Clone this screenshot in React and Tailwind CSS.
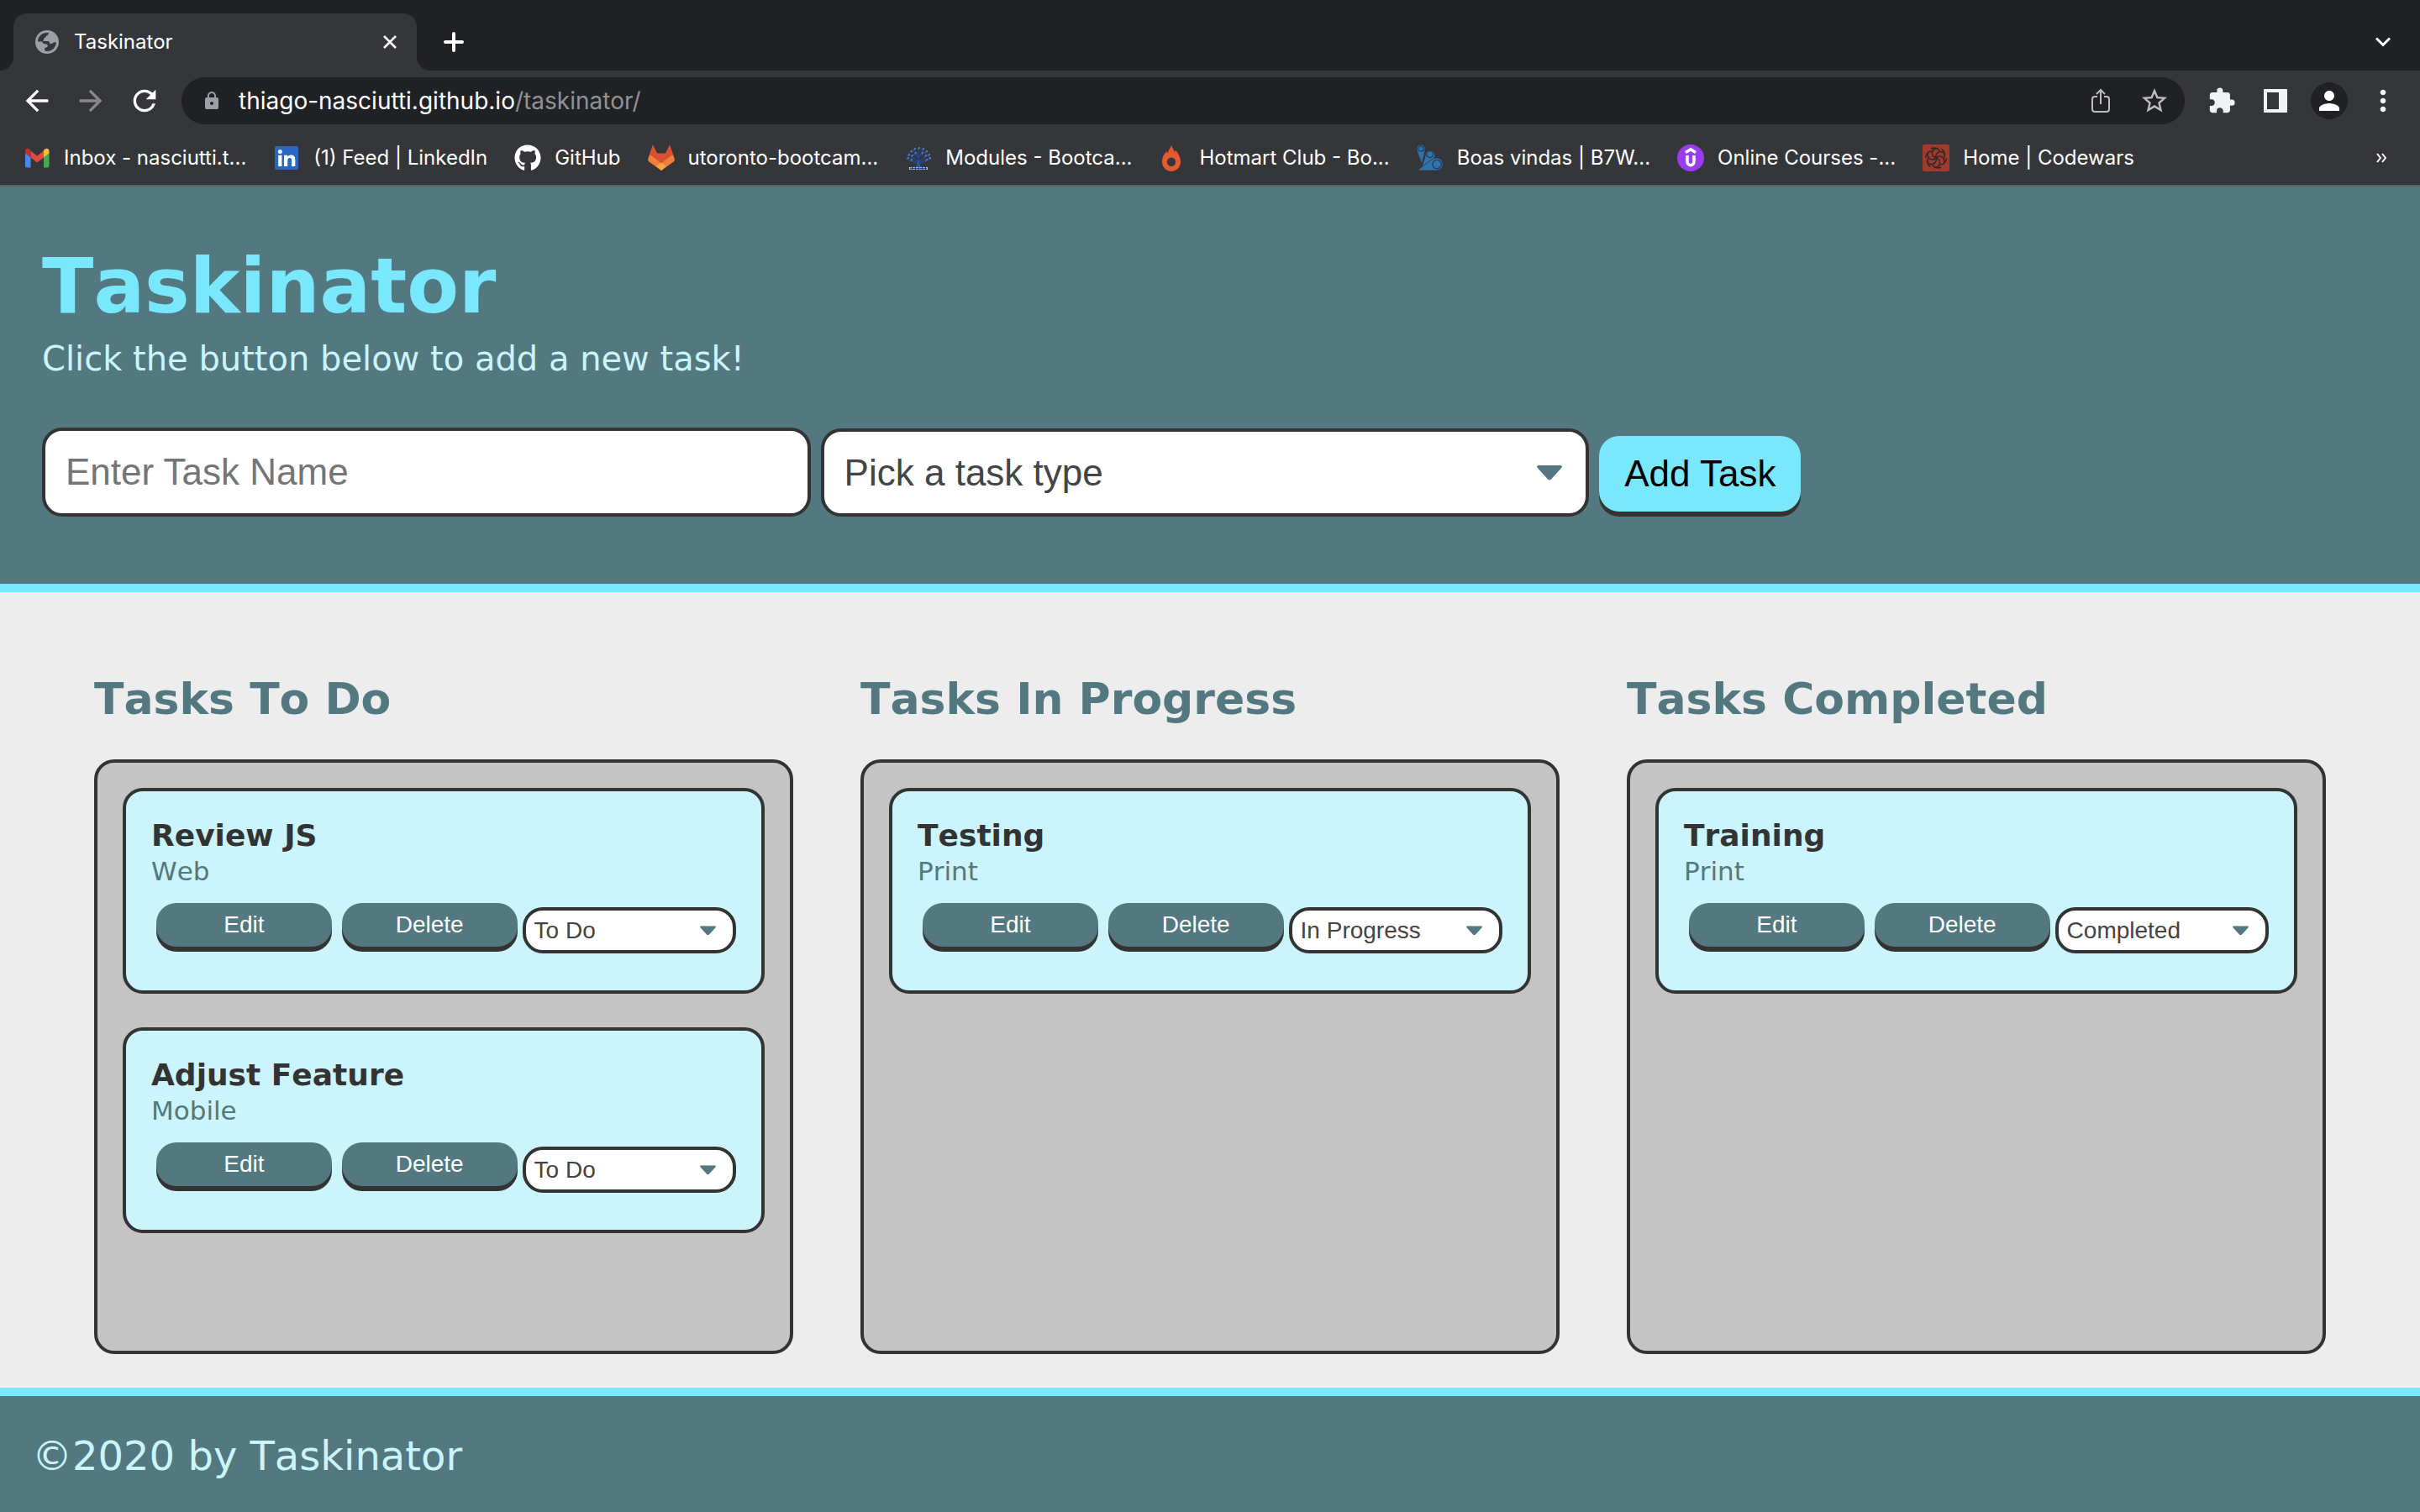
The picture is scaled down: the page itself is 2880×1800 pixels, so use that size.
import React from "react";
import {
  MdArrowBack,
  MdArrowForward,
  MdRefresh,
  MdLock,
  MdStarBorder,
  MdExtension,
  MdMoreVert,
  MdPerson,
} from "react-icons/md";
import { FaGithub } from "react-icons/fa";

/* ---------- icons ---------- */

function GlobeIcon() {
  return (
    <svg viewBox="0 0 28 28" className="size-7 shrink-0" aria-hidden="true">
      <circle cx="14" cy="14" r="14" fill="#9aa0a6" />
      <path
        d="M3 13.5C2.900 8 7.500 3 14 3l2.500.2c-1 .8-1.500 1.600-1.400 2.800-1.800.2-2.800.9-2.600 2.500-1.700.1-2.500 1-2.300 2.900-1 .6-1 1.100-.6 1.600h5c1.800 0 2.600 1.200 2.700 3 1.500.5 3 .3 3.900-1.200l3.700-.8C24.700 20.500 20 25 14 25c-.9 0-2-.2-2.800-.5v-3.700c1.800 0 3.600-.6 3.600-2.300 0-1.400-1-2-2.300-2-2.400 0-3.500-1.200-4.500-3z"
        fill="#35363a"
      />
    </svg>
  );
}

function GmailIcon() {
  return (
    <svg viewBox="0 0 32 32" className="size-8" aria-hidden="true">
      <path d="M2 10v15.500c0 1.100.9 2 2 2h4.500V15z" fill="#4a86f0" />
      <path d="M30.500 10v15.500c0 1.100-.9 2-2 2H24V15z" fill="#46a756" />
      <path d="M8.500 15.500v-8l7.750 6 7.750-6v8l-7.750 6z" fill="#dd4a3e" />
      <path d="M2 8c0-3 3-4 5-2.500l1.500 1.200v8.800L2 10.500z" fill="#bd3329" />
      <path d="M30.500 8c0-3-3-4-5-2.500L24 6.700v8.800l6.500-5z" fill="#f5bd2d" />
    </svg>
  );
}

function LinkedInIcon() {
  return (
    <svg viewBox="0 0 32 32" className="size-8" aria-hidden="true">
      <rect x="2" y="2" width="28" height="28" rx="2" fill="#2b66c0" />
      <circle cx="8.300" cy="8.500" r="2.500" fill="#fff" />
      <path
        d="M6.200 12.700h4.200V26H6.200zM13 12.700h4v1.900c.7-1.200 2.200-2.200 4.300-2.200 4 0 5 2.500 5 6V26h-4.200v-6.800c0-1.700-.4-3.200-2.300-3.200-2 0-2.600 1.500-2.600 3.200V26H13z"
        fill="#fff"
      />
    </svg>
  );
}

function GitLabIcon() {
  return (
    <svg viewBox="0 0 32 32" className="size-8" aria-hidden="true">
      <path d="M6 0l5 10.500h10L26 0l5.500 16L16 31 .5 16z" fill="#d7502f" />
      <path d="M.3 17l2.200-5L16 22l13.500-10 2.200 5c.3 1.500 0 2.700-1 3.500L16 31 1.300 20.500c-1-.8-1.300-2-1-3.500z" fill="#ee7f3c" />
      <path d="M4 11l12 12 12-12z" fill="#d7502f" />
      <path d="M10 26l6-4.500 6 4.500-6 5z" fill="#f4a740" />
    </svg>
  );
}

function TreeIcon() {
  const leaves = [
    [16, 5], [11, 6], [21, 6], [7, 9], [25, 9], [4, 13], [28, 13],
    [12, 11], [20, 11], [3, 17], [29, 17], [8, 14], [24, 14], [7, 19], [25, 19],
  ];
  return (
    <svg viewBox="0 0 32 32" className="size-8" aria-hidden="true">
      <g stroke="#21498f" strokeWidth="1.600" fill="none">
        <path d="M16 27V5M16 21L6 13M16 21l10-8M16 16L10 7M16 16l6-9M15 22L4 18M17 22l11-4" />
      </g>
      {leaves.map(([x, y]) => (
        <g key={`${x}-${y}`}>
          <circle cx={x} cy={y} r="1.500" fill="#2a55a3" />
          <circle cx={x + 1} cy={y - 1} r=".7" fill="#b5cdef" />
        </g>
      ))}
      <path d="M14.500 19h3l.5 6 3 3H11l3-3z" fill="#2a55a3" />
      <path d="M5 28.500h22" stroke="#b7cdea" strokeWidth="3" strokeDasharray="3 1" />
      <path d="M6 28.500h20" stroke="#21498f" strokeWidth="1.400" />
    </svg>
  );
}

function FlameIcon() {
  return (
    <svg viewBox="0 0 32 32" className="size-8" aria-hidden="true">
      <path
        fillRule="evenodd"
        d="M15 0c.6 4.500 3 5 3.500 9 .6-.5 1-1.400 1.200-2.300C23 10 26 15 26 20.500 26 27 21 32 15 32S4 27 4 20.500C4 15 6.500 11.500 9.500 8c.2 1.200.6 1.800 1.300 2.200C11.500 6 14.500 4.500 15 0zm0 15.500a5.200 5.200 0 100 10.400 5.200 5.200 0 000-10.400z"
        fill="#e35a31"
      />
    </svg>
  );
}

function PinsIcon() {
  return (
    <svg viewBox="0 0 32 32" className="size-8" aria-hidden="true">
      <g fill="#2f73ab" stroke="#35363a" strokeWidth=".8">
        <path d="M0 5a5 5 0 0110 0c0 4-2.500 12-4 18.500C4.300 17 0 9.500 0 5z" />
        <path d="M10.300 13.500a5.800 5.800 0 1110.500 2.800c-1.600 2.700-4 3.300-6 4.200L6 27z" />
        <path d="M.5 31L17 18.500c5-4.500 14-3 14 5 0 4.500-3.500 7.500-8 7.500z" />
      </g>
      <g fill="none" stroke="#1e4263" strokeWidth="1.300">
        <circle cx="5" cy="5" r="3.200" />
        <circle cx="15.700" cy="11.500" r="4" />
        <circle cx="24" cy="23.500" r="5.200" />
      </g>
    </svg>
  );
}

function UdemyIcon() {
  return (
    <svg viewBox="0 0 32 32" className="size-8" aria-hidden="true">
      <circle cx="16" cy="16" r="16" fill="#9a3df0" />
      <path d="M10 9.500L16 5.800l6 3.700M12 13v7.500c0 5.500 8 5.500 8 0V13" fill="none" stroke="#fff" strokeWidth="3.500" />
    </svg>
  );
}

function CodewarsIcon() {
  return (
    <svg viewBox="0 0 32 32" className="size-8" aria-hidden="true">
      <rect width="32" height="32" rx="2" fill="#a23a2c" />
      <g fill="none" stroke="#31282a" strokeWidth="1.600">
        {[0, 60, 120, 180, 240, 300].map((a) => (
          <path key={a} d="M16 16c-1-4 1-7 5-7.500 3 0 5 1.500 6 4M21 8.500C19 4.500 14 3 10 5" transform={`rotate(${a} 16 16)`} />
        ))}
      </g>
    </svg>
  );
}

function ShareIcon() {
  return (
    <svg viewBox="0 0 32 32" className="size-8" fill="none" stroke="#bdbdbe" strokeWidth="2" aria-hidden="true">
      <path d="M12 11H9a3 3 0 00-3 3v12a3 3 0 003 3h14a3 3 0 003-3V14a3 3 0 00-3-3h-3M16 20V3.500M11 8l5-5 5 5" />
    </svg>
  );
}

function SidePanelIcon() {
  return (
    <svg viewBox="0 0 28 28" className="size-7" aria-hidden="true">
      <path fillRule="evenodd" d="M0 0h28v28H0zM4 4v20h14V4z" fill="#f1f3f4" />
    </svg>
  );
}

function CloseIcon() {
  return (
    <svg viewBox="0 0 16 16" className="size-4" aria-hidden="true">
      <path d="M1 1l14 14M15 1L1 15" stroke="#fff" strokeWidth="2.500" />
    </svg>
  );
}

function PlusIcon() {
  return (
    <svg viewBox="0 0 24 24" className="size-6" aria-hidden="true">
      <path d="M12 2v20M2 12h20" stroke="#fff" strokeWidth="4" strokeLinecap="round" />
    </svg>
  );
}

function ChevronIcon() {
  return (
    <svg viewBox="0 0 18 12" className="h-3 w-[18px]" fill="none" aria-hidden="true">
      <path d="M1 1.500l8 8 8-8" stroke="#fff" strokeWidth="3" />
    </svg>
  );
}

function OverflowIcon() {
  return (
    <svg viewBox="0 0 12 12" className="size-3" fill="none" aria-hidden="true">
      <path d="M1 1l4 5-4 5M7 1l4 5-4 5" stroke="#fff" strokeWidth="2" />
    </svg>
  );
}

/* ---------- browser chrome ---------- */

const BOOKMARKS = [
  { label: "Inbox - nasciutti.t...", icon: <GmailIcon /> },
  { label: "(1) Feed | LinkedIn", icon: <LinkedInIcon /> },
  { label: "GitHub", icon: <FaGithub className="size-8 text-white" aria-hidden="true" /> },
  { label: "utoronto-bootcam...", icon: <GitLabIcon /> },
  { label: "Modules - Bootca...", icon: <TreeIcon /> },
  { label: "Hotmart Club - Bo...", icon: <FlameIcon /> },
  { label: "Boas vindas | B7W...", icon: <PinsIcon /> },
  { label: "Online Courses -...", icon: <UdemyIcon /> },
  { label: "Home | Codewars", icon: <CodewarsIcon /> },
];

function IconButton({ label, className = "", children }) {
  return (
    <button type="button" aria-label={label} className={`flex size-11 shrink-0 items-center justify-center ${className}`}>
      {children}
    </button>
  );
}

function BrowserChrome() {
  return (
    <div className="shrink-0 border-b-2 border-[#5f5f62] bg-[#35363a] font-['Inter',sans-serif] text-white [font-kerning:auto]">
      <div className="flex h-[84px] items-end bg-[#202124]">
        <div className="size-4 shrink-0 bg-[#35363a]">
          <div className="size-full rounded-br-2xl bg-[#202124]" />
        </div>
        <div className="flex h-[68px] w-[480px] items-center rounded-t-2xl bg-[#35363a] pr-4 pl-[26px]">
          <GlobeIcon />
          <span className="ml-[18px] flex-1 text-2xl">Taskinator</span>
          <button type="button" aria-label="Close tab" className="flex size-8 items-center justify-center">
            <CloseIcon />
          </button>
        </div>
        <div className="size-4 shrink-0 bg-[#35363a]">
          <div className="size-full rounded-bl-2xl bg-[#202124]" />
        </div>
        <div className="flex h-[68px] flex-1 items-center justify-between pr-[22px] pl-[6px]">
          <IconButton label="New tab">
            <PlusIcon />
          </IconButton>
          <IconButton label="Search tabs">
            <ChevronIcon />
          </IconButton>
        </div>
      </div>

      <div className="flex h-[72px] items-center pr-[22px] pl-[22px]">
        <div className="flex gap-5">
          <IconButton label="Back">
            <MdArrowBack className="size-10" />
          </IconButton>
          <IconButton label="Forward" className="text-[#87888b]">
            <MdArrowForward className="size-10" />
          </IconButton>
          <IconButton label="Reload">
            <MdRefresh className="size-10" />
          </IconButton>
        </div>
        <div className="ml-[22px] flex h-14 flex-1 items-center rounded-full bg-[#202124] pr-[14px] pl-6">
          <MdLock className="size-6 text-[#9aa0a6]" aria-hidden="true" />
          <a href="#taskinator" className="ml-5 flex-1 text-[28px] leading-9">
            thiago-nasciutti.github.io<span className="text-[#919294]">/taskinator/</span>
          </a>
          <IconButton label="Share">
            <ShareIcon />
          </IconButton>
          <IconButton label="Bookmark this page" className="ml-5 text-[#bdbdbe]">
            <MdStarBorder className="size-9" />
          </IconButton>
        </div>
        <div className="ml-[22px] flex gap-5 text-[#f1f3f4]">
          <IconButton label="Extensions">
            <MdExtension className="size-[34px]" />
          </IconButton>
          <IconButton label="Side panel">
            <SidePanelIcon />
          </IconButton>
          <IconButton label="Profile" className="rounded-full bg-[#202124] text-white">
            <MdPerson className="size-9" />
          </IconButton>
          <IconButton label="Menu">
            <MdMoreVert className="size-10" />
          </IconButton>
        </div>
      </div>

      <div className="flex h-16 items-center justify-between pr-6 pl-7">
        <nav aria-label="Bookmarks" className="flex items-center gap-8">
          {BOOKMARKS.map((b) => (
            <a key={b.label} href="#bookmark" className="flex items-center gap-4 text-2xl whitespace-nowrap">
              {b.icon}
              {b.label}
            </a>
          ))}
        </nav>
        <IconButton label="More bookmarks">
          <OverflowIcon />
        </IconButton>
      </div>
    </div>
  );
}

/* ---------- task board ---------- */

const STATUSES = ["To Do", "In Progress", "Completed"];

const COLUMNS = [
  {
    title: "Tasks To Do",
    status: "To Do",
    tasks: [
      { name: "Review JS", type: "Web" },
      { name: "Adjust Feature", type: "Mobile" },
    ],
  },
  { title: "Tasks In Progress", status: "In Progress", tasks: [{ name: "Testing", type: "Print" }] },
  { title: "Tasks Completed", status: "Completed", tasks: [{ name: "Training", type: "Print" }] },
];

function Caret({ className }) {
  return (
    <svg
      viewBox="0 0 30 18"
      className={`pointer-events-none absolute top-1/2 -translate-y-1/2 ${className}`}
      aria-hidden="true"
    >
      <path d="M2 0h26c2 0 2.500 2 1 3.300L17 16.500c-1.300 1.300-2.700 1.300-4 0L1 3.300C-.5 2 0 0 2 0z" fill="#53787f" />
    </svg>
  );
}

function TaskButton({ children }) {
  return (
    <button
      type="button"
      className="mx-[6px] h-[52px] w-[30%] rounded-3xl bg-[#53787f] text-[28px] leading-8 text-white shadow-[0_6px_0_#333333]"
    >
      {children}
    </button>
  );
}

function TaskCard({ task, status }) {
  return (
    <li className="rounded-3xl border-4 border-[#333333] bg-[#cbf4fc] px-[30px] pt-[30px] pb-11">
      <h3 className="text-4xl leading-[46px] font-bold text-[#333333]">{task.name}</h3>
      <span className="block text-[31px] leading-[38px] text-[#53787f]">{task.type}</span>
      <div className="mt-[19px] flex items-start font-['Liberation_Sans',sans-serif] [font-kerning:auto]">
        <TaskButton>Edit</TaskButton>
        <TaskButton>Delete</TaskButton>
        <div className="relative mt-[5px] flex-1">
          <select
            aria-label={`Status of ${task.name}`}
            defaultValue={status}
            className="block h-[55px] w-full appearance-none rounded-3xl border-4 border-[#333333] bg-white pl-[10px] text-[28px] leading-8 text-[#444444]"
          >
            {STATUSES.map((s) => (
              <option key={s}>{s}</option>
            ))}
          </select>
          <Caret className="right-6 w-[19px]" />
        </div>
      </div>
    </li>
  );
}

function TaskColumn({ column }) {
  return (
    <section className="flex flex-1 flex-col">
      <h2 className="text-[52px] leading-[64px] font-bold text-[#53787f]">{column.title}</h2>
      <ul className="mt-10 flex flex-1 flex-col gap-10 rounded-3xl border-4 border-[#333333] bg-[#c4c4c4] p-[30px]">
        {column.tasks.map((t) => (
          <TaskCard key={t.name} task={t} status={column.status} />
        ))}
      </ul>
    </section>
  );
}

function Header() {
  return (
    <header className="border-b-[10px] border-[#79e7fc] bg-[#53787f] px-[50px] pt-16 pb-20">
      <h1 className="text-[90px] leading-[110px] font-bold text-[#79e7fc]">Taskinator</h1>
      <p className="text-[40px] leading-[62px] text-[#cbf4fc]">Click the button below to add a new task!</p>
      <form
        className="mt-[51px] flex items-end gap-3 font-['Liberation_Sans',sans-serif] text-[44px] [font-kerning:auto]"
        onSubmit={(e) => e.preventDefault()}
      >
        <input
          type="text"
          aria-label="Task name"
          placeholder="Enter Task Name"
          className="h-[106px] w-[32.9%] rounded-3xl border-4 border-[#333333] bg-white px-6 text-[#444444] placeholder:text-[#757575]"
        />
        <div className="relative w-[32.9%]">
          <select
            aria-label="Task type"
            defaultValue=""
            className="block h-[105px] w-full appearance-none rounded-3xl border-4 border-[#333333] bg-white px-6 text-[#444444]"
          >
            <option value="">Pick a task type</option>
            <option>Print</option>
            <option>Web</option>
            <option>Mobile</option>
          </select>
          <Caret className="right-8 w-[30px]" />
        </div>
        <button
          type="submit"
          className="mb-[6px] h-[90px] shrink-0 rounded-3xl bg-[#79e7fc] px-[30px] text-black shadow-[0_6px_0_#333333]"
        >
          Add Task
        </button>
      </form>
    </header>
  );
}

export default function App() {
  return (
    <div className="flex min-h-screen flex-col bg-[#ededed] font-['Verdana','DejaVu_Sans',sans-serif] [font-kerning:none]">
      <BrowserChrome />
      <Header />
      <main className="flex flex-1 gap-20 px-28 pt-[95px] pb-10">
        {COLUMNS.map((c) => (
          <TaskColumn key={c.title} column={c} />
        ))}
      </main>
      <footer className="border-t-[10px] border-[#79e7fc] bg-[#53787f] px-[38px] pt-[38px] pb-[34px] text-5xl leading-[66px] text-[#cbf4fc]">
        ©2020 by Taskinator
      </footer>
    </div>
  );
}
